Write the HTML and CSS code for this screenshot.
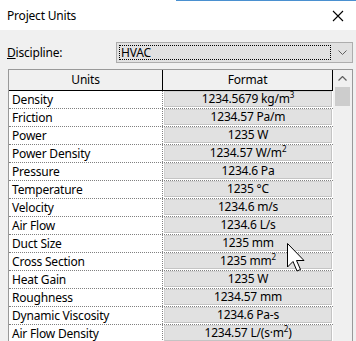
FILE: index.html
```html
<!DOCTYPE html>
<html>
<head>
<meta charset="utf-8">
<link rel="stylesheet" href="styles.css">
</head>
<body>
<div class="window">
  <div class="titlebar">
    <span class="title">Project Units</span>
    <svg class="close" width="12" height="12" viewBox="0 0 12 12"><path d="M1 1 L11 11 M11 1 L1 11" stroke="#000" stroke-width="1.1" fill="none"/></svg>
  </div>
  <div class="content">
    <div class="discipline">
      <label class="disc-label"><u>D</u>iscipline:</label>
      <div class="combo">
        <div class="combo-focus">HVAC</div>
        <svg class="chev" width="9" height="5" viewBox="0 0 9 5"><path d="M0.5 0.5 L4.5 4.5 L8.5 0.5" stroke="#606060" stroke-width="1" fill="none"/></svg>
      </div>
    </div>
    <div class="table">
      <div class="cols">
        <div class="head">
          <div class="h-units">Units</div>
          <div class="h-format">Format</div>
        </div>
        <div class="row"><div class="name">Density</div><div class="fmt"><span class="btn">1234.5679 kg/m<sup>3</sup></span></div></div>
        <div class="row"><div class="name">Friction</div><div class="fmt"><span class="btn">1234.57 Pa/m</span></div></div>
        <div class="row"><div class="name">Power</div><div class="fmt"><span class="btn">1235 W</span></div></div>
        <div class="row"><div class="name">Power Density</div><div class="fmt"><span class="btn">1234.57 W/m<sup>2</sup></span></div></div>
        <div class="row"><div class="name">Pressure</div><div class="fmt"><span class="btn">1234.6 Pa</span></div></div>
        <div class="row"><div class="name">Temperature</div><div class="fmt"><span class="btn">1235 °C</span></div></div>
        <div class="row"><div class="name">Velocity</div><div class="fmt"><span class="btn">1234.6 m/s</span></div></div>
        <div class="row"><div class="name">Air Flow</div><div class="fmt"><span class="btn">1234.6 L/s</span></div></div>
        <div class="row"><div class="name">Duct Size</div><div class="fmt"><span class="btn">1235 mm</span></div></div>
        <div class="row"><div class="name">Cross Section</div><div class="fmt"><span class="btn">1235 mm<sup>2</sup></span></div></div>
        <div class="row"><div class="name">Heat Gain</div><div class="fmt"><span class="btn">1235 W</span></div></div>
        <div class="row"><div class="name">Roughness</div><div class="fmt"><span class="btn">1234.57 mm</span></div></div>
        <div class="row"><div class="name">Dynamic Viscosity</div><div class="fmt"><span class="btn">1234.6 Pa-s</span></div></div>
        <div class="row"><div class="name">Air Flow Density</div><div class="fmt"><span class="btn">1234.57 L/(s·m<sup>2</sup>)</span></div></div>
      </div>
      <div class="scrollbar">
        <svg class="up" width="9" height="5" viewBox="0 0 9 5"><path d="M0.5 4.5 L4.5 0.5 L8.5 4.5" stroke="#606060" stroke-width="1.2" fill="none"/></svg>
        <div class="thumb"></div>
      </div>
    </div>
  </div>
  <svg class="cursor" width="20" height="30" viewBox="0 0 20 30"><path d="M0.5 0.5 L0.5 24 L6 18.5 L10 28 L13.5 26.5 L9.5 17.5 L17 17.5 Z" fill="#fff" stroke="#000" stroke-width="1"/></svg>
</div>
</body>
</html>
```

FILE: styles.css
```css
* { box-sizing: border-box; }
html, body { margin: 0; padding: 0; }
body {
  width: 356px;
  height: 341px;
  overflow: hidden;
  font-family: "Noto Sans", "Liberation Sans", sans-serif;
  font-size: 12px;
  letter-spacing: -0.2px;
  color: #000;
  background: #f0f0f0;
}
.window {
  position: relative;
  width: 356px;
  height: 341px;
  overflow: hidden;
}
.titlebar {
  position: relative;
  height: 30px;
  background: #fff;
  display: flex;
  align-items: center;
  justify-content: space-between;
  padding: 0 12px 0 7px;
}
.titlebar::before {
  content: "";
  position: absolute;
  top: 0;
  left: 176px;
  right: 0;
  height: 1px;
  background: #4a90d0;
}
.title { font-size: 12px; line-height: 16px; margin-top: 2px; }
.close { margin-top: 1px; }
.content {
  padding: 12px 3px 0 8px;
}
.discipline {
  display: flex;
  align-items: center;
  height: 21px;
  margin-bottom: 6px;
}
.disc-label {
  width: 109px;
  margin-left: -1px;
}
.disc-label u { text-decoration-thickness: 1px; }
.combo {
  flex: 1;
  height: 21px;
  border: 1px solid #adadad;
  background: #e1e1e1;
  display: flex;
  align-items: center;
  padding: 0 4px 0 2px;
}
.combo-focus {
  flex: 1;
  height: 15px;
  border: 1px dotted #000;
  line-height: 13px;
  padding-left: 1px;
}
.chev { margin-left: 7px; margin-right: 1px; }
.table {
  display: flex;
  height: 280px;
  border-left: 1px solid #999;
  border-top: 1px solid #999;
  border-right: 1px solid #999;
  background: #fff;
}
.cols { width: 324px; }
.head {
  display: flex;
  height: 21px;
  background: #f0f0f0;
  border-bottom: 1px solid #000;
  border-right: 1px solid #000;
}
.h-units {
  width: 154px;
  border-right: 1px solid #000;
  text-align: center;
  line-height: 20px;
}
.h-format {
  flex: 1;
  text-align: center;
  line-height: 20px;
}
.row {
  display: flex;
  height: 18px;
  border-bottom: 1px dotted #808080;
}
.name {
  width: 154px;
  border-right: 1px dotted #808080;
  padding-left: 3px;
  line-height: 17px;
  background: #fff;
}
.fmt {
  flex: 1;
  padding: 0 1px 0 1px;
  background: #fff;
  display: flex;
}
.btn {
  flex: 1;
  height: 16px;
  background: #e1e1e1;
  border: 1px solid #d2d2d2;
  border-right-color: #c4c4c4;
  border-bottom-color: #c4c4c4;
  text-align: center;
  line-height: 14px;
  color: #000;
}
.btn sup {
  font-size: 8px;
  line-height: 0;
  vertical-align: 5px;
}
.scrollbar {
  flex: 1;
  background: #f0f0f0;
  display: flex;
  flex-direction: column;
  align-items: center;
}
.up { margin-top: 6px; }
.thumb {
  width: 15px;
  height: 19px;
  background: #cdcdcd;
  margin-top: 6px;
}
.cursor {
  position: absolute;
  left: 287px;
  top: 243px;
}
```
